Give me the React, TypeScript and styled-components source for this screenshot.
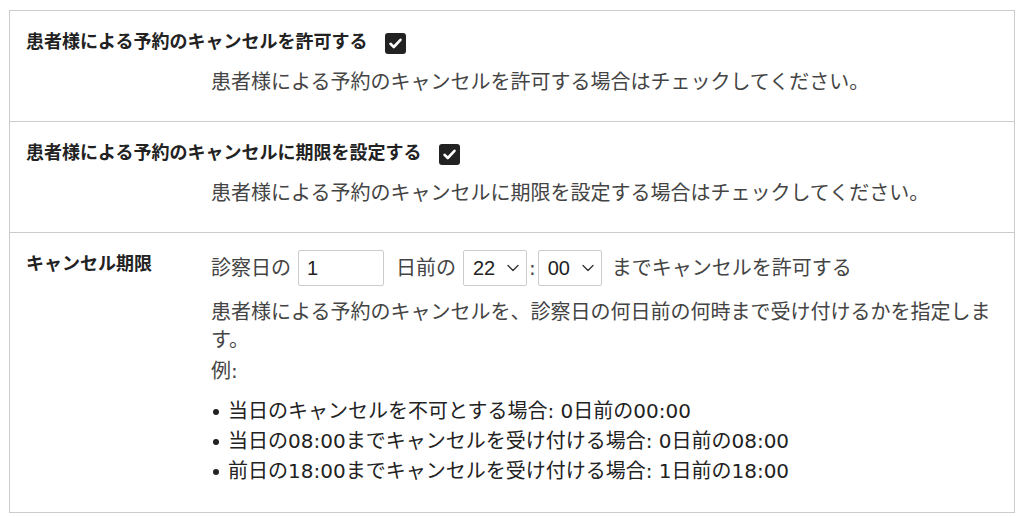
import * as React from 'react'
import styled, { createGlobalStyle } from 'styled-components'
import { ChevronDown } from 'lucide-react'

const GlobalStyle = createGlobalStyle`
  body {
    margin: 0;
    background: #fff;
    font-family: "DejaVu Sans", "Noto Sans CJK JP", sans-serif;
    color: #444;
  }
`

const Page = styled.div`
  padding: 10px 9px 4px 9px;
`

const Table = styled.div`
  border: 1px solid #ccc;
`

const Row = styled.div`
  display: grid;
  grid-template-columns: 185px 1fr;
  row-gap: 14px;
  padding: 17px 14px 25px 16px;

  & + & {
    border-top: 1px solid #ccc;
  }
`

const Heading = styled.div<{ $wide?: boolean }>`
  grid-column: ${p => (p.$wide ? '1 / -1' : '1')};
  display: flex;
  align-items: flex-start;
`

const Label = styled.span`
  font-family: "Noto Sans CJK JP", sans-serif;
  font-size: 18px;
  font-weight: 700;
  line-height: 24px;
  color: #222;
  white-space: nowrap;
`

const CheckBox = styled.span`
  display: inline-flex;
  align-items: center;
  justify-content: center;
  width: 21px;
  height: 21px;
  margin: 5px 0 0 18px;
  border-radius: 3px;
  background: #222;
`

const Description = styled.div`
  grid-column: 2;
  font-size: 20px;
  line-height: 28px;
  color: #444;
`

const Content = styled.div`
  grid-column: 2;
  font-size: 20px;
  line-height: 28px;
  color: #444;
`

const Controls = styled.div`
  display: flex;
  align-items: center;
  height: 36px;
  margin-bottom: 12px;
  white-space: nowrap;
`

const NumberInput = styled.input`
  box-sizing: border-box;
  width: 86px;
  height: 36px;
  margin: 0 12px 0 7px;
  padding: 0 8px;
  border: 1px solid #ccc;
  border-radius: 2px;
  font-family: "Liberation Sans", sans-serif;
  font-size: 20px;
  color: #222;
  outline: none;
`

const SelectBox = styled.span<{ $first?: boolean }>`
  position: relative;
  display: inline-block;
  width: 64px;
  height: 36px;
  margin-left: ${p => (p.$first ? '7px' : '0')};

  svg {
    position: absolute;
    right: 4px;
    top: 8px;
    pointer-events: none;
  }
`

const Select = styled.select`
  box-sizing: border-box;
  width: 100%;
  height: 100%;
  appearance: none;
  padding: 0 0 0 9px;
  border: 1px solid #ccc;
  border-radius: 2px;
  background: #fff;
  font-family: "Liberation Sans", sans-serif;
  font-size: 20px;
  color: #222;
  outline: none;
`

const Colon = styled.span`
  margin: 0 2px;
`

const Tail = styled.span`
  margin-left: 10px;
`

const Example = styled.div`
  margin-top: 3px;
`

const List = styled.ul`
  margin: 11px 0 1px;
  padding: 0;
  list-style: none;
`

const Item = styled.li`
  position: relative;
  padding-left: 17px;
  line-height: 30px;
  color: #222;

  &::before {
    content: "";
    position: absolute;
    left: 2px;
    top: 13px;
    width: 6px;
    height: 6px;
    border-radius: 50%;
    background: #222;
  }
`

const Check = () => (
  <CheckBox>
    <svg width="15" height="15" viewBox="0 0 15 15">
      <path d="M2.5 7.8 L5.8 11 L12.5 3.8" fill="none" stroke="#fff" strokeWidth="2.6" strokeLinecap="round" strokeLinejoin="round" />
    </svg>
  </CheckBox>
)

const hours = Array.from({ length: 24 }, (_, i) => String(i).padStart(2, '0'))
const minutes = ['00', '15', '30', '45']

const examples = [
  '当日のキャンセルを不可とする場合: 0日前の00:00',
  '当日の08:00までキャンセルを受け付ける場合: 0日前の08:00',
  '前日の18:00までキャンセルを受け付ける場合: 1日前の18:00',
]

export default function App() {
  return (
    <Page>
      <GlobalStyle />
      <Table>
        <Row>
          <Heading $wide>
            <Label>患者様による予約のキャンセルを許可する</Label>
            <Check />
          </Heading>
          <Description>患者様による予約のキャンセルを許可する場合はチェックしてください。</Description>
        </Row>
        <Row>
          <Heading $wide>
            <Label>患者様による予約のキャンセルに期限を設定する</Label>
            <Check />
          </Heading>
          <Description>患者様による予約のキャンセルに期限を設定する場合はチェックしてください。</Description>
        </Row>
        <Row>
          <Heading>
            <Label>キャンセル期限</Label>
          </Heading>
          <Content>
            <Controls>
              <span>診察日の</span>
              <NumberInput defaultValue="1" />
              <span>日前の</span>
              <SelectBox $first>
                <Select defaultValue="22">
                  {hours.map(h => <option key={h} value={h}>{h}</option>)}
                </Select>
                <ChevronDown size={20} strokeWidth={1.6} color="#333" />
              </SelectBox>
              <Colon>:</Colon>
              <SelectBox>
                <Select defaultValue="00">
                  {minutes.map(m => <option key={m} value={m}>{m}</option>)}
                </Select>
                <ChevronDown size={20} strokeWidth={1.6} color="#333" />
              </SelectBox>
              <Tail>までキャンセルを許可する</Tail>
            </Controls>
            <div>患者様による予約のキャンセルを、診察日の何日前の何時まで受け付けるかを指定します。</div>
            <Example>例:</Example>
            <List>
              {examples.map(e => <Item key={e}>{e}</Item>)}
            </List>
          </Content>
        </Row>
      </Table>
    </Page>
  )
}
